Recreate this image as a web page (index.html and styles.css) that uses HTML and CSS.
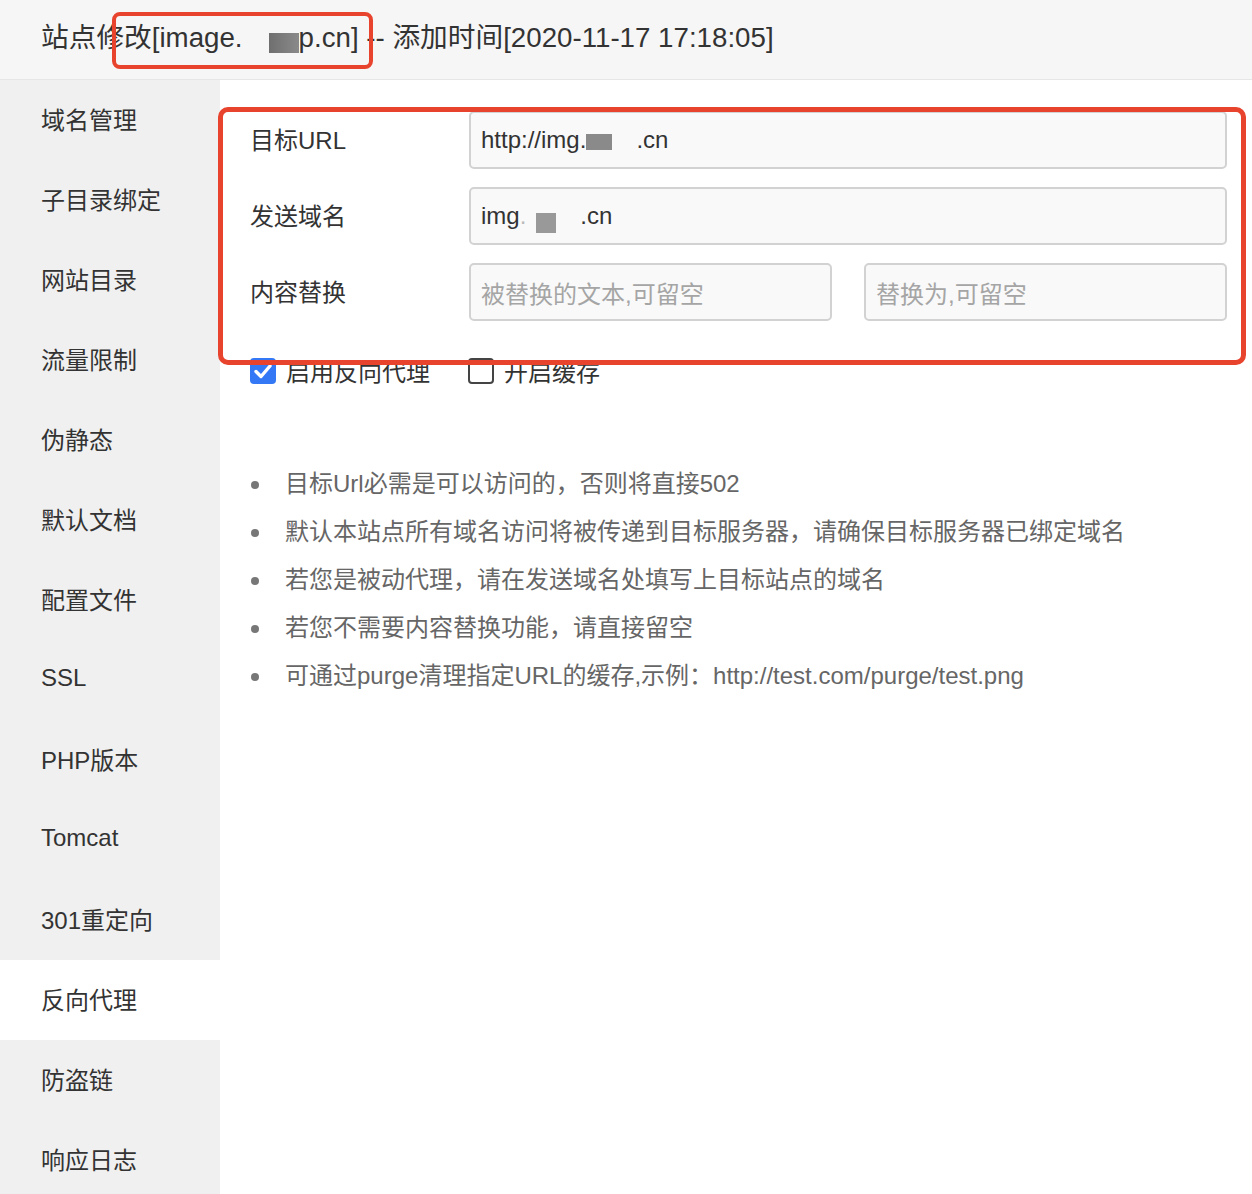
FILE: index.html
```html
<!DOCTYPE html>
<html lang="zh">
<head>
<meta charset="utf-8">
<title>站点修改</title>
<link rel="stylesheet" href="styles.css">
</head>
<body>
<div class="page">
  <header class="top">
    <h1 class="title">站点修改[image.<span class="gap-s"></span><span class="blur blur-h"></span>p.cn] -- 添加时间[2020-11-17 17:18:05]</h1>
    <div class="mark mark-head"></div>
  </header>
  <div class="body">
    <nav class="side">
      <div class="item">域名管理</div>
      <div class="item">子目录绑定</div>
      <div class="item">网站目录</div>
      <div class="item">流量限制</div>
      <div class="item">伪静态</div>
      <div class="item">默认文档</div>
      <div class="item">配置文件</div>
      <div class="item">SSL</div>
      <div class="item">PHP版本</div>
      <div class="item">Tomcat</div>
      <div class="item">301重定向</div>
      <div class="item active">反向代理</div>
      <div class="item">防盗链</div>
      <div class="item">响应日志</div>
    </nav>
    <main class="main">
      <div class="form">
        <div class="row">
          <div class="label">目标URL</div>
          <div class="field"><span>http://img.</span><span class="blur blur-a"></span><span class="gap-m"></span><span>.cn</span></div>
        </div>
        <div class="row">
          <div class="label">发送域名</div>
          <div class="field"><span>img</span><span class="faint">.</span><span class="gap-x"></span><span class="blur blur-b"></span><span class="gap-m"></span><span>.cn</span></div>
        </div>
        <div class="row">
          <div class="label">内容替换</div>
          <div class="pair">
            <div class="field ph">被替换的文本,可留空</div>
            <div class="field ph">替换为,可留空</div>
          </div>
        </div>
        <div class="checks">
          <label class="check"><span class="box on"><svg viewBox="0 0 26 26" width="26" height="26"><path d="M6 13.5 L11 18.5 L20 8" fill="none" stroke="#fff" stroke-width="3.4" stroke-linecap="round" stroke-linejoin="round"/></svg></span>启用反向代理</label>
          <label class="check"><span class="box"></span>开启缓存</label>
        </div>
        <div class="mark mark-form"></div>
      </div>
      <ul class="tips">
        <li>目标Url必需是可以访问的，否则将直接502</li>
        <li>默认本站点所有域名访问将被传递到目标服务器，请确保目标服务器已绑定域名</li>
        <li>若您是被动代理，请在发送域名处填写上目标站点的域名</li>
        <li>若您不需要内容替换功能，请直接留空</li>
        <li>可通过purge清理指定URL的缓存,示例：http://test.com/purge/test.png</li>
      </ul>
    </main>
  </div>
</div>
</body>
</html>
```

FILE: styles.css
```css
html, body {
  margin: 0;
  padding: 0;
  background: #fff;
}
body {
  font-family: "Liberation Sans", "Noto Sans CJK SC", sans-serif;
  color: #333;
}
.page {
  width: 1252px;
  height: 1194px;
  overflow: hidden;
  position: relative;
}
.top {
  height: 80px;
  box-sizing: border-box;
  padding: 0 0 9px 41px;
  background: #f6f6f6;
  border-bottom: 1px solid #e6e6e6;
  display: flex;
  align-items: center;
  position: relative;
}
.title {
  margin: 0;
  font-size: 27.7px;
  font-weight: normal;
  color: #333;
  white-space: nowrap;
}
.gap-s { display: inline-block; width: 26px; }
.gap-m { display: inline-block; width: 24px; }
.gap-x { display: inline-block; width: 10px; }
.blur {
  display: inline-block;
  background: linear-gradient(90deg, #6f6f6f, #8a8a8a);
  vertical-align: middle;
}
.blur-h { width: 30px; height: 20px; margin-top: 6px; }
.blur-a { width: 26px; height: 16px; background: #8a8a8a; margin-top: 4px; }
.blur-b { width: 20px; height: 20px; background: #999; margin-top: 14px; }
.faint { color: #bbb; }

.body {
  display: flex;
  height: 1114px;
}
.side {
  width: 220px;
  flex: none;
  background: #f0f0f0;
}
.item {
  height: 80px;
  box-sizing: border-box;
  padding: 0 0 4px 41px;
  display: flex;
  align-items: center;
  font-size: 24px;
  color: #333;
}
.item.active {
  background: #fff;
}
.main {
  flex: 1;
  padding: 31px 25px 0 30px;
}
.form {
  position: relative;
}
.row {
  display: flex;
  align-items: center;
  margin-bottom: 18px;
}
.label {
  width: 219px;
  flex: none;
  font-size: 24px;
  color: #333;
  padding-bottom: 3px;
}
.field {
  flex: 1;
  height: 58px;
  box-sizing: border-box;
  border: 2px solid #d2d2d2;
  border-radius: 5px;
  background: #f9f9f9;
  display: flex;
  align-items: center;
  padding-left: 10px;
  font-size: 24px;
  color: #333;
  white-space: nowrap;
}
.field.ph {
  color: #a5a5a5;
}
.pair {
  flex: 1;
  display: flex;
  gap: 32px;
}
.checks {
  display: flex;
  align-items: center;
  gap: 38px;
  margin-top: 32px;
}
.check {
  display: flex;
  align-items: center;
  gap: 10px;
  font-size: 24px;
  color: #333;
}
.box {
  width: 26px;
  height: 26px;
  box-sizing: border-box;
  border: 2px solid #444;
  border-radius: 4px;
  display: inline-block;
}
.box.on {
  border: none;
  background: #3478f6;
}
.box svg { display: block; }

.mark {
  position: absolute;
  border: 5px solid #e8432d;
  border-radius: 10px;
  box-sizing: border-box;
  pointer-events: none;
}
.mark-head {
  left: 112px;
  top: 12px;
  width: 261px;
  height: 57px;
  border-width: 4px;
  border-radius: 8px;
}
.mark-form {
  left: -32px;
  top: -4px;
  width: 1028px;
  height: 258px;
}

.tips {
  margin: 72px 0 0;
  padding: 0 0 0 35px;
  list-style: none;
}
.tips li {
  position: relative;
  height: 48px;
  line-height: 48px;
  font-size: 24px;
  color: #666;
  white-space: nowrap;
}
.tips li::before {
  content: "";
  position: absolute;
  left: -34px;
  top: 21px;
  width: 8px;
  height: 8px;
  border-radius: 50%;
  background: #777;
}
```
